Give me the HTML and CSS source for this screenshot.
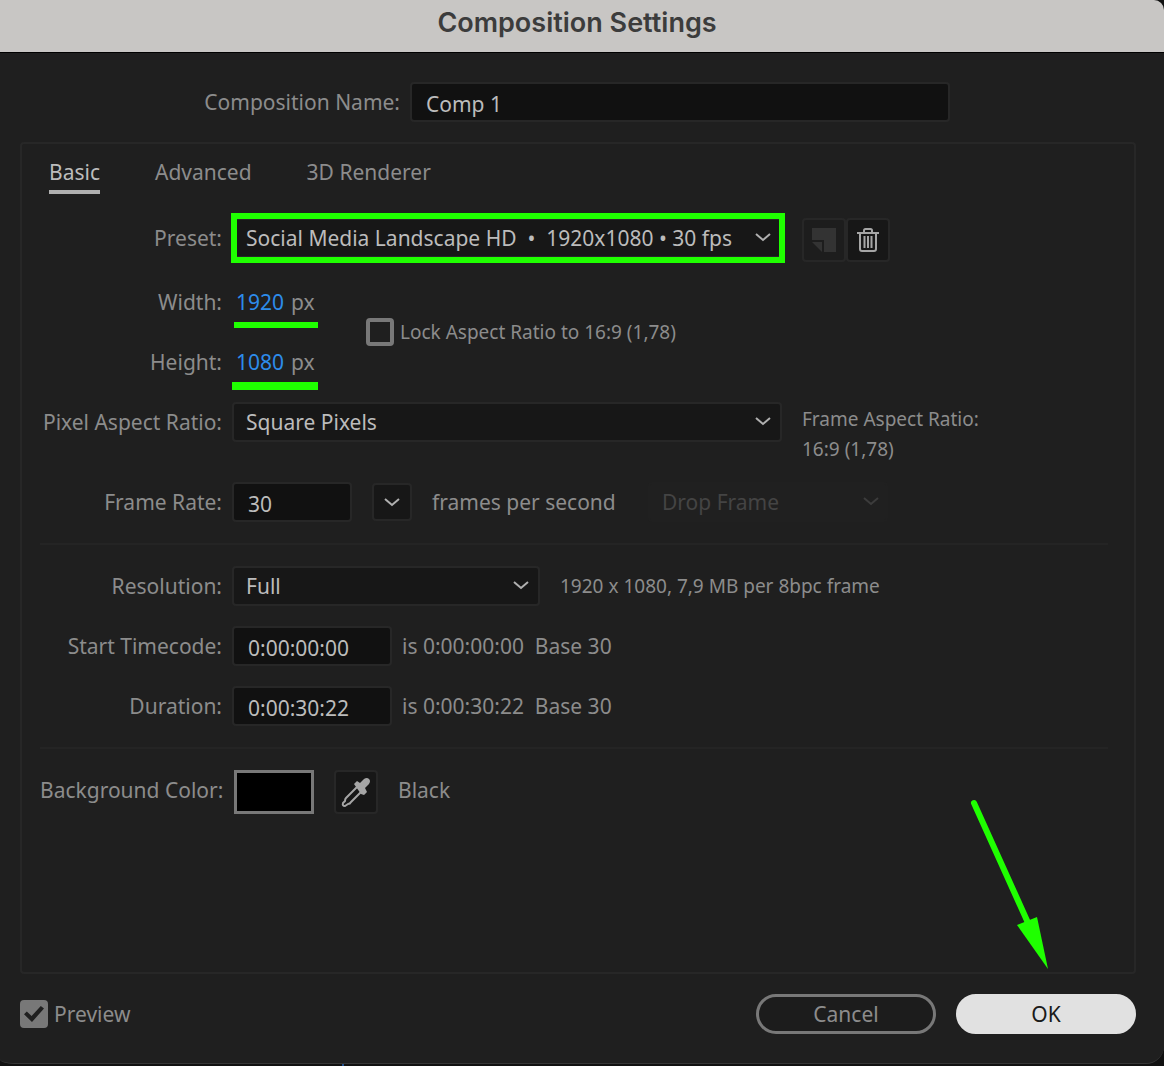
FILE: index.html
```html
<!DOCTYPE html>
<html lang="en">
  <head>
    <meta charset="UTF-8" />
    <meta name="viewport" content="width=device-width, initial-scale=1.0" />
    <title>Composition Settings</title>
    <link rel="stylesheet" href="styles.css" />
  </head>
  <body>
    <form class="dialog">
      <header class="titlebar">
        <h1 class="title">Composition Settings</h1>
      </header>

      <div class="dialog-body">
        <div class="name-row">
          <label for="compName">Composition Name:</label>
          <input class="field" id="compName" type="text" value="Comp 1" />
        </div>

        <section class="panel">
          <nav class="tabs">
            <button type="button" class="tab active">Basic</button>
            <button type="button" class="tab">Advanced</button>
            <button type="button" class="tab">3D Renderer</button>
          </nav>

          <div class="rows">
            <div class="row top">
              <label class="row-label" for="preset">Preset:</label>
              <div class="select wide highlight">
                <select id="preset">
                  <option>Social Media Landscape HD &nbsp;•&nbsp; 1920x1080 • 30 fps</option>
                </select>
                <svg class="chevron" viewBox="0 0 16 10"><path d="M1 2l7 6 7-6" /></svg>
              </div>
              <div class="icon-group">
                <button type="button" class="icon-button" aria-label="New preset" disabled>
                  <svg width="24" height="24" viewBox="0 0 24 24">
                    <path fill="#333" d="M0 0h24v24H12V12H0z" />
                    <path fill="#333" d="M0 14h10v10z" />
                  </svg>
                </button>
                <button type="button" class="icon-button" aria-label="Delete preset">
                  <svg width="22" height="24" viewBox="0 0 22 24" fill="none" stroke="#a6a6a6" stroke-width="2">
                    <path d="M0 5h22M7 5V2.500Q7 1 8.500 1h5Q15 1 15 2.500V5" />
                    <path d="M3 5v16q0 2 2 2h12q2 0 2-2V5M7.500 8v12M11 8v12M14.500 8v12" />
                  </svg>
                </button>
              </div>
            </div>

            <div class="size-row">
              <div class="size-fields">
                <div class="row">
                  <label class="row-label" for="width">Width:</label>
                  <div class="value marked">
                    <input id="width" type="text" value="1920" /><span>px</span>
                  </div>
                </div>
                <div class="row">
                  <label class="row-label" for="height">Height:</label>
                  <div class="value marked thick">
                    <input id="height" type="text" value="1080" /><span>px</span>
                  </div>
                </div>
              </div>
              <label class="check small">
                <input type="checkbox" />Lock Aspect Ratio to 16:9 (1,78)
              </label>
            </div>

            <div class="row top">
              <label class="row-label" for="pixelRatio">Pixel Aspect Ratio:</label>
              <div class="select wide">
                <select id="pixelRatio">
                  <option>Square Pixels</option>
                </select>
                <svg class="chevron" viewBox="0 0 16 10"><path d="M1 2l7 6 7-6" /></svg>
              </div>
              <p class="small ratio">Frame Aspect Ratio:<br />16:9 (1,78)</p>
            </div>

            <div class="row">
              <label class="row-label" for="frameRate">Frame Rate:</label>
              <input class="field rate" id="frameRate" type="text" value="30" />
              <button type="button" class="drop-button" aria-label="Frame rates">
                <svg class="arrow" viewBox="0 0 16 10"><path d="M1 2l7 6 7-6" /></svg>
              </button>
              <span class="fps">frames per second</span>
              <div class="select drop-frame">
                <select aria-label="Drop Frame" disabled>
                  <option>Drop Frame</option>
                </select>
                <svg class="chevron" viewBox="0 0 16 10"><path d="M1 2l7 6 7-6" /></svg>
              </div>
            </div>

            <hr />

            <div class="row">
              <label class="row-label" for="resolution">Resolution:</label>
              <div class="select resolution">
                <select id="resolution">
                  <option>Full</option>
                </select>
                <svg class="chevron" viewBox="0 0 16 10"><path d="M1 2l7 6 7-6" /></svg>
              </div>
              <span class="small">1920 x 1080, 7,9 MB per 8bpc frame</span>
            </div>

            <div class="row">
              <label class="row-label" for="start">Start Timecode:</label>
              <input class="field timecode" id="start" type="text" value="0:00:00:00" />
              <span>is 0:00:00:00 &nbsp;Base 30</span>
            </div>

            <div class="row">
              <label class="row-label" for="duration">Duration:</label>
              <input class="field timecode" id="duration" type="text" value="0:00:30:22" />
              <span>is 0:00:30:22 &nbsp;Base 30</span>
            </div>

            <hr />

            <div class="row top">
              <label class="row-label" for="swatch">Background Color:</label>
              <button type="button" class="swatch" id="swatch"></button>
              <button type="button" class="icon-button" aria-label="Pick color">
                <svg width="30" height="30" viewBox="0 0 30 30">
                  <path fill="#a6a6a6" d="M13 7l3-3 3 2 4-4q3-2 5 0t0 5l-4 4 2 4-3 3-3-1z" />
                  <path fill="none" stroke="#a6a6a6" stroke-width="2" stroke-linejoin="round" d="M16 10L5 21q-1 1-1 3l-2 2q-1 3 2 3l3-2q2 0 3-2l10-10" />
                </svg>
              </button>
              <span class="color-name">Black</span>
            </div>
          </div>
        </section>

        <footer class="footer">
          <label class="check"><input type="checkbox" checked />Preview</label>
          <div class="actions">
            <button type="button" class="button">Cancel</button>
            <div class="ok-wrap">
              <svg class="pointer" width="90" height="180" viewBox="0 0 90 180">
                <path stroke="#1fff00" stroke-width="6" stroke-linecap="round" d="M8 8l55 122" />
                <path fill="#1fff00" d="M51 130l20-8 11 52z" />
              </svg>
              <button type="submit" class="button primary">OK</button>
            </div>
          </div>
        </footer>
      </div>
    </form>
  </body>
</html>
```

FILE: styles.css
```css
* {
  margin: 0;
  padding: 0;
  box-sizing: border-box;
}

:root {
  --bg: #1f1f1f;
  --border: #272727;
  --field: #111111;
  --control: #171717;
  --label: #8c8c8c;
  --text: #bcbcbc;
  --blue: #2d8ceb;
  --marker: #1fff00;
}

body {
  display: flex;
  min-height: 100vh;
  padding-bottom: 2px;
  background: #111 linear-gradient(#1f4f8f, #1f4f8f) no-repeat 342px 100% / 2px 2px;
  color: var(--label);
  font-family: "Noto Sans", sans-serif;
  font-size: 21px;
  line-height: 30px;
}

input,
select,
button {
  font: inherit;
  color: inherit;
  appearance: none;
  background: none;
  border: none;
  outline: none;
}

.dialog {
  flex: 1;
  display: flex;
  flex-direction: column;
  background-color: var(--bg);
  border-bottom: 1px solid #363636;
  border-radius: 0 10px 18px 14px / 0 10px 18px 5px;
}

.titlebar {
  height: 53px;
  padding: 8px 10px 0 0;
  background-color: #c8c6c4;
  border-bottom: 1px solid #000;
  border-top-right-radius: 10px;
  text-align: center;
}

.title {
  font-family: Inter, sans-serif;
  font-size: 27px;
  font-weight: 600;
  line-height: 30px;
  color: #3c3c3c;
}

.dialog-body {
  flex: 1;
  display: flex;
  flex-direction: column;
  gap: 20px;
  padding: 29px 28px 29px 20px;
}

.name-row {
  display: grid;
  grid-template-columns: 380px minmax(0, 540px);
  align-items: center;
  gap: 10px;
}

.name-row label {
  text-align: right;
}

.field {
  height: 40px;
  padding: 4px 14px 0;
  background-color: var(--field);
  border: 2px solid var(--border);
  border-radius: 4px;
  color: var(--text);
}

.panel {
  flex: 1;
  padding: 12px 26px 20px 18px;
  border: 2px solid var(--border);
  border-radius: 4px;
}

.tabs {
  display: flex;
  gap: 55px;
  padding-left: 9px;
  margin-bottom: 24px;
}

.tab {
  height: 38px;
  padding-bottom: 2px;
  border-bottom: 4px solid transparent;
}

.tab.active {
  color: var(--text);
  border-color: #b0b0b0;
}

.rows {
  display: flex;
  flex-direction: column;
  gap: 20px;
}

.row {
  display: flex;
  align-items: center;
  gap: 10px;
  min-height: 40px;
}

.row-label {
  width: 182px;
  text-align: right;
  white-space: nowrap;
}

.row.top {
  align-items: flex-start;
}

.row.top .row-label {
  line-height: 40px;
}

.small {
  font-size: 19px;
}

.ratio {
  padding-top: 2px;
  margin-bottom: -2px;
}

.select {
  position: relative;
  height: 40px;
  margin-right: 10px;
}

.select select {
  width: 100%;
  height: 100%;
  padding: 0 36px 0 12px;
  background-color: var(--control);
  border: 2px solid var(--border);
  border-radius: 4px;
  color: var(--text);
}

.wide {
  width: 550px;
}

.resolution {
  width: 308px;
}

.chevron {
  position: absolute;
  top: 14px;
  right: 11px;
  pointer-events: none;
}

.chevron,
.arrow {
  width: 16px;
  height: 10px;
  fill: none;
  stroke: #b0b0b0;
  stroke-width: 2;
}

/* green marker boxes and underlines */
.highlight::after {
  content: "";
  position: absolute;
  inset: -5px -3px -5px -1px;
  border: 6px solid var(--marker);
  pointer-events: none;
}

.marked {
  position: relative;
}

.marked::after {
  content: "";
  position: absolute;
  top: 100%;
  left: 2px;
  width: 84px;
  height: 6px;
  background-color: var(--marker);
}

.marked.thick::after {
  left: 0;
  width: 86px;
  height: 8px;
}

.icon-group {
  display: flex;
}

.icon-button,
.drop-button {
  display: flex;
  align-items: center;
  justify-content: center;
  width: 44px;
  height: 44px;
  background-color: var(--control);
  border: 2px solid var(--border);
  border-radius: 4px;
}

.icon-button:disabled {
  background-color: #1d1d1d;
}

.drop-button {
  width: 40px;
  height: 38px;
  margin: 0 10px;
}

.size-row {
  display: flex;
  align-items: center;
  gap: 44px;
}

.size-fields {
  display: flex;
  flex-direction: column;
  gap: 20px;
}

.value {
  display: flex;
  align-items: center;
  width: 90px;
  height: 40px;
  padding-left: 4px;
}

.value input {
  width: 55px;
  color: var(--blue);
}

.check {
  display: flex;
  align-items: center;
  gap: 6px;
}

.check input {
  display: grid;
  place-items: center;
  width: 28px;
  height: 28px;
  border: 4px solid #787878;
  border-radius: 4px;
}

.check input:checked {
  background-color: #787878;
}

.check input:checked::after {
  content: "";
  width: 20px;
  height: 16px;
  background-color: var(--bg);
  clip-path: polygon(0 52%, 14% 34%, 38% 62%, 84% 0, 100% 16%, 40% 100%);
}

.rate {
  width: 120px;
}

.fps {
  min-width: 206px;
}

.drop-frame {
  width: 240px;
}

.drop-frame select {
  background-color: #202020;
  border-color: #202020;
  color: #444;
  opacity: 1;
}

.drop-frame .chevron {
  right: 9px;
  stroke: #3c3c3c;
}

.timecode {
  width: 160px;
}

hr {
  height: 2px;
  margin: 1px 0;
  border: none;
  background-color: #242424;
}

.swatch {
  width: 80px;
  height: 44px;
  margin: 0 10px 0 2px;
  background-color: #000;
  border: 3px solid #787878;
}

.color-name {
  padding-left: 10px;
  line-height: 40px;
}

.footer {
  display: flex;
  align-items: center;
  justify-content: space-between;
}

.actions {
  display: flex;
  gap: 20px;
}

.button {
  width: 180px;
  height: 40px;
  border: 3px solid #787878;
  border-radius: 20px;
  background-color: #1c1c1c;
}

.button.primary {
  background-color: #e1e1e1;
  border-color: #e1e1e1;
  color: #1a1a1a;
}

.ok-wrap {
  position: relative;
}

.pointer {
  position: absolute;
  left: 10px;
  bottom: 59px;
  pointer-events: none;
}
```
